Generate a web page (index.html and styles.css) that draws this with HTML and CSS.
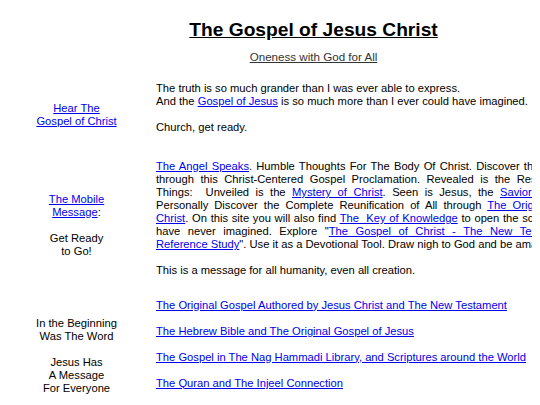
FILE: index.html
```html
<!DOCTYPE html>
<html lang="en">

<head>
    <meta charset="UTF-8">
    <meta name="viewport" content="width=device-width, initial-scale=1.0">
    <title>The Gospel of Jesus Christ</title>
    <link rel="stylesheet" href="styles.css">
</head>

<body>
    <div class="page">
        <div class="header">
            <h1>The Gospel of Jesus Christ</h1>
            <div class="subtitle">Oneness with God for All</div>
        </div>

        <div class="row first">
            <div class="side">
                <p><a href="#">Hear The<br>Gospel of Christ</a></p>
            </div>
            <div class="main">
                <p>The truth is so much grander than I was ever able to express.<br>
                    And the <a href="#">Gospel of Jesus</a> is so much more than I ever could have imagined.</p>
                <p>Church, get ready.</p>
            </div>
        </div>

        <div class="row second">
            <div class="side">
                <p><a href="#">The Mobile<br>Message</a>:</p>
                <p>Get Ready<br>to Go!</p>
            </div>
            <div class="main">
                <p class="justify"><a href="#">The Angel Speaks</a>. Humble Thoughts For The Body Of Christ. Discover the Truth of God
                    through this Christ-Centered Gospel Proclamation. Revealed is the Restoration of All
                    Things: &nbsp;Unveiled is the <a href="#">Mystery of Christ</a>. Seen is Jesus, the <a href="#">Savior of the World</a>.
                    Personally Discover the Complete Reunification of All through <a href="#">The Original Gospel of
                    Christ</a>. On this site you will also find <a href="#">The &nbsp;Key of Knowledge</a> to open the scriptures as you
                    have never imagined. Explore "<a href="#">The Gospel of Christ - The New Testament Cross
                    Reference Study</a>". Use it as a Devotional Tool. Draw nigh to God and be amazed.</p>
                <p>This is a message for all humanity, even all creation.</p>
            </div>
        </div>

        <div class="row third">
            <div class="side">
                <p>In the Beginning<br>Was The Word</p>
                <p>Jesus Has<br>A Message<br>For Everyone</p>
            </div>
            <div class="main links">
                <p><a href="#">The Original Gospel Authored by Jesus Christ and The New Testament</a></p>
                <p><a href="#">The Hebrew Bible and The Original Gospel of Jesus</a></p>
                <p><a href="#">The Gospel in The Nag Hammadi Library, and Scriptures around the World</a></p>
                <p><a href="#">The Quran and The Injeel Connection</a></p>
            </div>
        </div>
    </div>
</body>

</html>
```

FILE: styles.css
```css
body {
    margin: 8px;
    background-color: white;
    color: #000;
    font-family: "Liberation Sans", Arial, sans-serif;
    font-size: 11.2px;
    line-height: 13px;
}

a {
    color: #0000ee;
}

p {
    margin: 0;
}

.page {
    width: 611px;
}

.header {
    padding-top: 11px;
    text-align: center;
}

h1 {
    margin: 0;
    font-size: 19.2px;
    line-height: 22px;
    text-decoration: underline;
}

.subtitle {
    margin-top: 8.5px;
    font-size: 11.6px;
    color: #333;
    text-decoration: underline;
}

.row {
    display: grid;
    grid-template-columns: 137px 452px;
    column-gap: 11px;
    align-items: center;
}

.row.first {
    margin-top: 19.5px;
}

.row.second {
    margin-top: 13px;
}

.row.third {
    margin-top: 8.5px;
}

.side {
    text-align: center;
}

.side p + p {
    margin-top: 13px;
}

.main p {
    margin-bottom: 13px;
}

.justify {
    text-align: justify;
}

.links {
    padding-bottom: 10px;
}
```
